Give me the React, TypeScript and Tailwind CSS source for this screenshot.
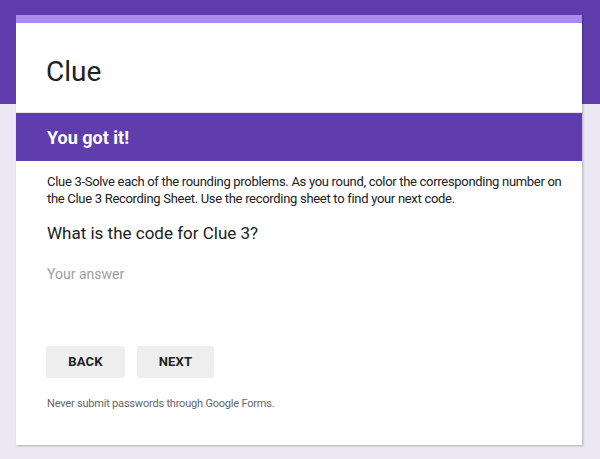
import React from 'react'

function FormButton({ label, width }: { label: string; width: string }) {
  return (
    <button
      className={`${width} h-[32px] rounded-[3px] bg-[#eeeeee] text-[13px] font-bold tracking-[0.2px] text-[#212121]`}
    >
      {label}
    </button>
  )
}

export default function App() {
  return (
    <div
      className="w-[600px] h-[459px] overflow-hidden bg-[linear-gradient(to_bottom,#5f3dad_104px,#ebe7f5_104px)] pt-[15px] pl-[16px]"
      style={{ fontFamily: 'Roboto, "Noto Sans", sans-serif' }}
    >
      <div className="w-[566px] h-[430px] bg-white shadow-[1px_1px_2px_rgba(0,0,0,0.25)] flex flex-col">
        {/* accent strip */}
        <div className="h-[8px] bg-[#a98bf5]" />

        {/* title */}
        <div className="h-[90px] pt-[31px] pl-[30px] border-b border-[#e6e3ee]">
          <h1 className="text-[28px] leading-[36px] text-[#212121]">Clue</h1>
        </div>

        {/* section header */}
        <div className="h-[48px] bg-[#5f3dad] flex items-center pl-[31px]">
          <h2 className="text-[18px] font-bold text-white">You got it!</h2>
        </div>

        {/* body */}
        <div className="pl-[30px] pr-[12px] pt-[12px]">
          <p className="pl-[1px] text-[13px] tracking-[-0.3px] leading-[17px] text-[#202124]">
            Clue 3-Solve each of the rounding problems. As you round, color the corresponding number on the Clue 3 Recording Sheet. Use the recording sheet to find your next code.
          </p>

          <div className="mt-[14px] pl-[1px] text-[17px] leading-[24px] text-[#202124]">
            What is the code for Clue 3?
          </div>

          <div className="mt-[19px] pl-[1px] text-[14px] leading-[20px] text-[#9e9e9e]">Your answer</div>

          <div className="mt-[62px] flex gap-[12px]">
            <FormButton label="BACK" width="w-[79px]" />
            <FormButton label="NEXT" width="w-[77px]" />
          </div>

          <p className="mt-[18px] pl-[1px] text-[11px] tracking-[-0.2px] leading-[16px] text-[#666666]">
            Never submit passwords through Google Forms.
          </p>
        </div>
      </div>
    </div>
  )
}
